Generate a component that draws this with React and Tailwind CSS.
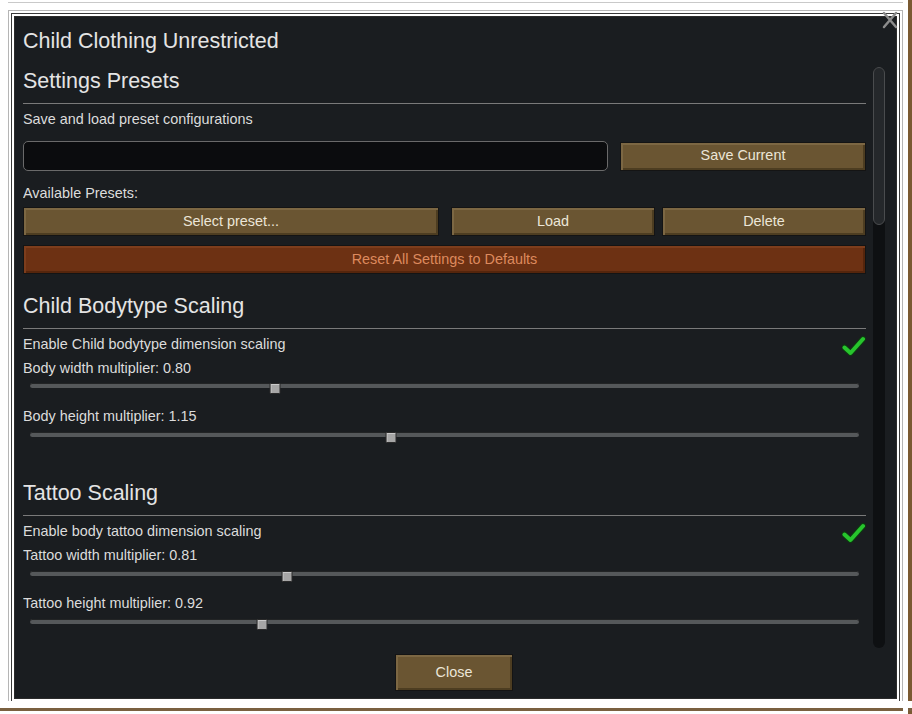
import React from 'react';

const FONT = { fontFamily: '"Liberation Sans", Arial, sans-serif' };

const BTN =
  'flex items-center justify-center border border-[#141414] bg-[#6a5532] text-[14.4px] text-[#ece6d8] shadow-[inset_2px_2px_0_#7c6743,inset_-2px_-2px_0_#4d3d21]';

const Heading = ({ children, className = '' }) => (
  <div className={className}>
    <div className="h-[24px] text-[21.5px] leading-[24px] text-[#e4e4e4]">{children}</div>
    <div className="mt-[10px] h-px bg-[#7a7a7a]" />
  </div>
);

const Label = ({ children, className = '' }) => (
  <div className={`h-[16px] text-[14.4px] leading-[16px] text-[#dcdcdc] ${className}`}>{children}</div>
);

const Check = () => (
  <svg width="24" height="21" viewBox="0 0 24 21" className="mt-[4px]">
    <path
      d="M2.5 11.5 L8.5 17 L21 3"
      fill="none"
      stroke="#0d3b10"
      strokeWidth="6"
      strokeLinecap="round"
      strokeLinejoin="round"
    />
    <path
      d="M2.5 11.5 L8.5 17 L21 3"
      fill="none"
      stroke="#27c42d"
      strokeWidth="4"
      strokeLinecap="round"
      strokeLinejoin="round"
    />
  </svg>
);

const ToggleRow = ({ label, className = '' }) => (
  <div className={`flex h-[16px] items-center justify-between ${className}`}>
    <Label>{label}</Label>
    <Check />
  </div>
);

const Slider = ({ pos, className = '' }) => (
  <div className={`relative h-[12px] px-[7px] ${className}`}>
    <div className="mt-[4px] h-[5px] rounded-full bg-[#55585a] shadow-[inset_0_1px_0_#222425]" />
    <div
      className="absolute top-[0px] h-[11px] w-[11px] -translate-x-1/2 rounded-[1px] border border-[#2a2a2a] bg-[#a6a6a6] shadow-[inset_1px_1px_0_#cacaca]"
      style={{ left: `calc(7px + (100% - 14px) * ${pos})` }}
    />
  </div>
);

export default function App() {
  return (
    <div className="relative h-[714px] w-[912px] overflow-hidden bg-white" style={FONT}>
      {/* outer frame decorations */}
      <div className="absolute left-[8px] top-[2px] h-px w-[904px] bg-[#c9c9c9]" />
      <div className="absolute left-[908px] top-[0px] h-[714px] w-[4px] bg-[#7a5a32]" />
      <div className="absolute left-[0px] top-[708px] h-[3px] w-[912px] bg-[#7a6040]" />
      <div className="absolute left-[903px] top-[0px] h-[714px] w-[5px] bg-white" />
      <div className="absolute left-[0px] top-[701px] h-[7px] w-[912px] bg-white" />

      <div className="pl-[15px] pt-[17px]">
        <div className="flex h-[681px] w-[881px] flex-col bg-[#1a1d20] pl-[8px] pr-[11px] pt-[12px] pb-[6px] shadow-[0_0_0_1px_#2b2b2b,0_0_0_3px_#ffffff,0_0_0_4px_#3a3a3a,0_0_0_6px_#ffffff,0_0_0_7px_#b5b5b5]">
          <div className="h-[24px] text-[21.5px] leading-[24px] text-[#e4e4e4]">Child Clothing Unrestricted</div>

          <div className="mt-[14px] flex h-[581px] gap-[7px]">
            <div className="w-[843px] overflow-hidden">
              <Heading className="mt-[2px]">Settings Presets</Heading>
              <Label className="mt-[7px]">Save and load preset configurations</Label>

              <div className="mt-[14px] flex h-[30px] items-center gap-[12px]">
                <div className="h-[30px] w-[585px] rounded-[5px] border border-[#6a6a6a] bg-[#0b0c0e]" />
                <button type="button" className={`${BTN} h-[29px] w-[246px]`}>
                  Save Current
                </button>
              </div>

              <Label className="mt-[14px]">Available Presets:</Label>

              <div className="mt-[6px] flex h-[29px]">
                <button type="button" className={`${BTN} h-[29px] w-[416px]`}>
                  Select preset...
                </button>
                <button type="button" className={`${BTN} ml-[12px] h-[29px] w-[204px]`}>
                  Load
                </button>
                <button type="button" className={`${BTN} ml-[7px] h-[29px] w-[204px]`}>
                  Delete
                </button>
              </div>

              <button
                type="button"
                className="mt-[9px] flex h-[29px] w-full items-center justify-center border border-[#141414] bg-[#6d3113] text-[14.4px] text-[#de8a5e] shadow-[inset_2px_2px_0_#7d3d1c,inset_-2px_-2px_0_#55250c]"
              >
                Reset All Settings to Defaults
              </button>

              <Heading className="mt-[20px]">Child Bodytype Scaling</Heading>
              <ToggleRow className="mt-[7px]" label="Enable Child bodytype dimension scaling" />
              <Label className="mt-[8px]">Body width multiplier: 0.80</Label>
              <Slider className="mt-[7px]" pos={0.296} />
              <Label className="mt-[13px]">Body height multiplier: 1.15</Label>
              <Slider className="mt-[8px]" pos={0.435} />

              <Heading className="mt-[37px]">Tattoo Scaling</Heading>
              <ToggleRow className="mt-[7px]" label="Enable body tattoo dimension scaling" />
              <Label className="mt-[8px]">Tattoo width multiplier: 0.81</Label>
              <Slider className="mt-[8px]" pos={0.31} />
              <Label className="mt-[12px]">Tattoo height multiplier: 0.92</Label>
              <Slider className="mt-[8px]" pos={0.28} />
            </div>

            {/* scrollbar */}
            <div className="relative w-[12px] rounded-full bg-[#0e1012]">
              <div className="h-[158px] rounded-full border border-[#4a4c4e] bg-[#25282b]" />
            </div>
          </div>

          <div className="mt-[6px] flex w-full justify-center">
            <button type="button" className={`${BTN} h-[37px] w-[118px]`}>
              Close
            </button>
          </div>
        </div>
      </div>

      {/* close X */}
      <svg className="absolute left-[882px] top-[11px]" width="16" height="18" viewBox="0 0 16 18">
        <path d="M2 2 L14 16 M14 2 L2 16" stroke="#8c8c8c" strokeWidth="2.5" strokeLinecap="round" />
      </svg>
    </div>
  );
}
